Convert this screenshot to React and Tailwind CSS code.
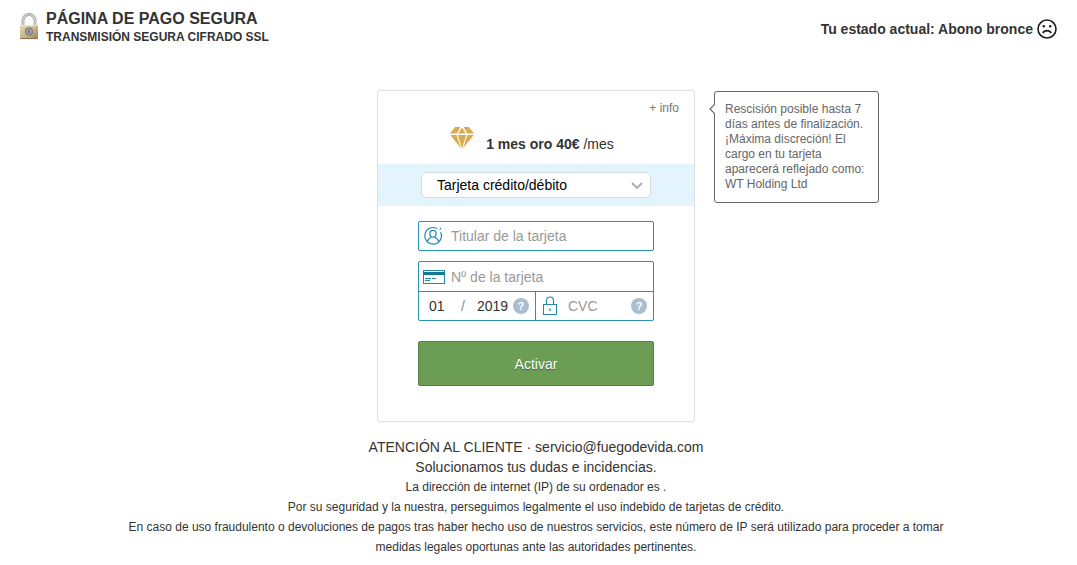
import React from 'react';

const SealLock = () => (
  <svg className="h-7 w-5 shrink-0" viewBox="0 0 20 28" aria-hidden="true">
    <defs>
      <linearGradient id="brass" x1="0" y1="0" x2="1" y2="1">
        <stop offset="0" stopColor="#e6d5b0" />
        <stop offset="0.5" stopColor="#cdb78b" />
        <stop offset="1" stopColor="#9a8059" />
      </linearGradient>
    </defs>
    <path d="M4 13V7.500a6 6 0 0 1 12 0V13" fill="none" stroke="#9b9b9b" strokeWidth="2.8" />
    <path d="M4 13V7.500a6 6 0 0 1 12 0V13" fill="none" stroke="#dcdcdc" strokeWidth="1.2" />
    <rect x="1" y="12" width="18" height="14" rx="1" fill="url(#brass)" />
    <path d="M1.5 12.700h17" stroke="#f4e8cb" />
    <path d="M1.5 25.600h17" stroke="#86704e" />
    <circle cx="10" cy="18.500" r="4" fill="#77787b" />
    <circle cx="10" cy="18.500" r="2.8" fill="#a9abb0" />
    <path d="M10 17v3" stroke="#4b4b4e" strokeWidth="1.3" />
  </svg>
);

const SadFace = () => (
  <svg className="h-5 w-5 shrink-0" viewBox="0 0 20 20" fill="none" stroke="#1a1a1a" aria-hidden="true">
    <circle cx="10" cy="10" r="9" strokeWidth="1.6" />
    <path d="M5.800 14c1.700-3.200 6.700-3.200 8.400 0" strokeWidth="1.6" />
    <circle cx="6.800" cy="7.300" r="1.200" fill="#1a1a1a" stroke="none" />
    <circle cx="13.200" cy="7.300" r="1.200" fill="#1a1a1a" stroke="none" />
  </svg>
);

const Diamond = () => (
  <svg className="h-[22px] w-6 shrink-0" viewBox="0 0 24 22" fill="#d9ab4e" aria-hidden="true">
    <path d="M5 0h5.400L6.800 6.600H0z" />
    <path d="M12 0.400l3.800 6.200H8.200z" />
    <path d="M13.600 0H19l5 6.600h-6.800z" />
    <path d="M0.200 8h6.300L11 21.200z" />
    <path d="M7.800 8h8.400L12 21.800z" />
    <path d="M17.500 8h6.300L13 21.200z" />
  </svg>
);

const PersonIcon = () => (
  <svg className="h-5 w-5" viewBox="0 0 20 20" fill="none" stroke="#2389a8" aria-hidden="true">
    <path d="M17.600 6.200A8.300 8.300 0 1 1 14.200 2.600" strokeWidth="1.2" />
    <path d="M16.800 4.200l1-2.400" strokeWidth="1" />
    <ellipse cx="10" cy="7.700" rx="3.100" ry="3.400" strokeWidth="1.2" />
    <path d="M4.300 15.800c.4-2.800 2-3.600 4-4.600M15.700 15.800c-.4-2.800-2-3.600-4-4.600" strokeWidth="1.2" />
  </svg>
);

const CardIcon = () => (
  <svg className="h-4 w-[22px]" viewBox="0 0 22 16" fill="none" stroke="#2389a8" aria-hidden="true">
    <rect x="0.5" y="1.500" width="21" height="13" />
    <path d="M0 4.500h22" strokeWidth="3" stroke="#167795" />
    <path d="M2 9.500h6M9 9.500h4M2 11.500h5" strokeWidth="1.2" />
  </svg>
);

const LockIcon = () => (
  <svg className="h-5 w-4" viewBox="0 0 16 20" fill="none" stroke="#2389a8" aria-hidden="true">
    <rect x="1.500" y="8.500" width="13" height="10" />
    <path d="M4.500 8.500V4.500a3.500 3.500 0 0 1 7 0v4" strokeWidth="1.2" />
    <path d="M8 12.500v2.500" strokeWidth="1.4" />
  </svg>
);

function HelpButton({ label }) {
  return (
    <button
      type="button"
      aria-label={label}
      className="h-4 w-4 shrink-0 rounded-full bg-[#aabdd1] text-center text-[11px] font-bold leading-4 text-white"
    >
      ?
    </button>
  );
}

function Header() {
  return (
    <header className="flex items-start justify-between pt-2 pr-5 pl-[19px]">
      <div className="flex items-center gap-[7px]">
        <SealLock />
        <div className="pt-px font-bold">
          <h1 className="text-base leading-5">PÁGINA DE PAGO SEGURA</h1>
          <p className="text-xs leading-4">TRANSMISIÓN SEGURA CIFRADO SSL</p>
        </div>
      </div>
      <div className="flex items-center gap-1 pt-[11px] text-sm font-bold">
        <span>Tu estado actual: Abono bronce</span>
        <SadFace />
      </div>
    </header>
  );
}

function InfoBubble() {
  return (
    <aside className="absolute top-0 left-full ml-5 w-[165px] rounded-[3px] border border-[#666] bg-white px-2.5 py-2.5 text-xs leading-[15px] text-[#666]">
      <svg className="absolute top-3 -left-[6px] h-[10px] w-[6px]" viewBox="0 0 6 10" aria-hidden="true">
        <path d="M6 0L1 5l5 5" fill="#fff" stroke="#666" strokeWidth="1.2" />
      </svg>
      Rescisión posible hasta 7 días antes de finalización. ¡Máxima discreción! El cargo en tu tarjeta
      aparecerá reflejado como: WT Holding Ltd
    </aside>
  );
}

function PaymentForm() {
  return (
    <form className="px-10 pt-[15px] pb-[35px] text-sm" onSubmit={(e) => e.preventDefault()}>
      <label className="flex h-[30px] items-center gap-1.5 rounded-[2px] border border-[#2a93b4] pl-1">
        <span className="flex w-[22px] shrink-0">
          <PersonIcon />
        </span>
        <input
          type="text"
          aria-label="Titular de la tarjeta"
          placeholder="Titular de la tarjeta"
          className="w-full min-w-0 outline-none placeholder:text-[#999]"
        />
      </label>

      <div className="mt-2.5 rounded-[2px] border border-[#2a93b4]">
        <label className="flex h-[30px] items-center gap-1.5 border-b border-[#2a93b4] pl-1">
          <span className="flex w-[22px] shrink-0">
            <CardIcon />
          </span>
          <input
            type="text"
            aria-label="Nº de la tarjeta"
            placeholder="Nº de la tarjeta"
            className="w-full min-w-0 outline-none placeholder:text-[#999]"
          />
        </label>
        <div className="flex h-7">
          <div className="flex w-1/2 items-center justify-between border-r border-[#2a93b4] pr-1.5 pl-2.5">
            <input type="text" aria-label="Mes" defaultValue="01" className="w-5 outline-none" />
            <span className="text-[#888]">/</span>
            <div className="flex items-center gap-1">
              <input type="text" aria-label="Año" defaultValue="2019" className="w-8 outline-none" />
              <HelpButton label="Ayuda caducidad" />
            </div>
          </div>
          <div className="flex w-1/2 items-center pr-1.5 pl-1.5">
            <LockIcon />
            <input
              type="text"
              aria-label="CVC"
              placeholder="CVC"
              className="ml-2.5 min-w-0 flex-1 outline-none placeholder:text-[#999]"
            />
            <HelpButton label="Ayuda CVC" />
          </div>
        </div>
      </div>

      <button
        type="submit"
        className="mt-5 h-[45px] w-full rounded-[2px] border border-[#567d42] bg-[#6c9d55] text-white [text-shadow:0_1px_1px_rgba(0,0,0,0.4)]"
      >
        Activar
      </button>
    </form>
  );
}

export default function App() {
  return (
    <div className="bg-white pb-2 font-['Liberation_Sans',Arial,sans-serif] text-[#333]">
      <Header />

      <main className="pt-[45px] pr-[5px]">
        <section className="relative mx-auto w-[318px] rounded-[3px] border border-[#ddd]">
          <div className="pt-[9px] pr-[15px] text-right text-xs leading-4">
            <a href="#info" className="text-[#777]">+ info</a>
          </div>
          <div className="flex items-center justify-center gap-3 pt-1.5 pb-2.5 pr-2">
            <Diamond />
            <p className="pt-3 text-sm leading-5">
              <b>1 mes oro 40€</b> /mes
            </p>
          </div>
          <div className="relative bg-[#e3f4fc] px-[43px] py-2">
            <select
              aria-label="Forma de pago"
              className="block h-[26px] w-full appearance-none rounded-[5px] border border-[#d5dde2] bg-white pl-[15px] text-sm text-black"
            >
              <option>Tarjeta crédito/débito</option>
            </select>
            <svg className="pointer-events-none absolute top-[18px] right-[51px] h-[7px] w-3" viewBox="0 0 12 7" aria-hidden="true">
              <path d="M1 1l5 5 5-5" fill="none" stroke="#aaa" strokeWidth="1.8" />
            </svg>
          </div>
          <PaymentForm />
          <InfoBubble />
        </section>

        <footer className="mx-auto mt-[15px] max-w-[840px] text-center text-xs leading-5">
          <p className="text-sm leading-5">
            ATENCIÓN AL CLIENTE · <a href="mailto:servicio@fuegodevida.com">servicio@fuegodevida.com</a>
          </p>
          <p className="text-sm leading-5">Solucionamos tus dudas e incidencias.</p>
          <p>La dirección de internet (IP) de su ordenador es .</p>
          <p>Por su seguridad y la nuestra, perseguimos legalmente el uso indebido de tarjetas de crédito.</p>
          <p>
            En caso de uso fraudulento o devoluciones de pagos tras haber hecho uso de nuestros servicios,
            este número de IP será utilizado para proceder a tomar medidas legales oportunas ante las
            autoridades pertinentes.
          </p>
        </footer>
      </main>
    </div>
  );
}
